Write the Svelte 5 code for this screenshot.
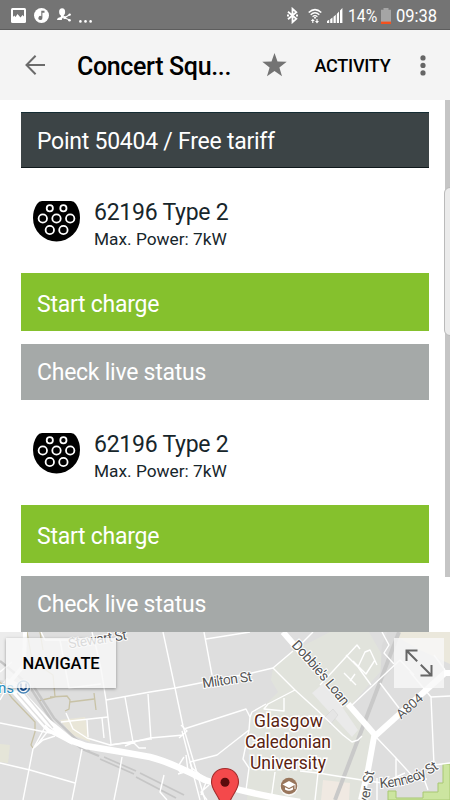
<script>
  const title = 'Concert Squ...';

  const point = {
    name: 'Point 50404 / Free tariff',
    connectors: [
      { id: 1, name: '62196 Type 2', power: 'Max. Power: 7kW' },
      { id: 2, name: '62196 Type 2', power: 'Max. Power: 7kW' }
    ]
  };

  // pins of the type 2 socket: x, y, radius
  const pins = [
    [16.8, 7.3, 3.1],
    [30.4, 7.3, 3.1],
    [9.8, 17.5, 4.2],
    [23.5, 17.5, 4.2],
    [37.2, 17.5, 4.2],
    [16.8, 29, 4.2],
    [30.4, 29, 4.2]
  ];

  const streets = [
    'M41 632L45 640L101 640',
    'M60 640L69 688L101 684',
    'M92 632L97 651L101 669L106 700L111 744',
    'M106 700L150 692L175 688L205 682L252 673L273 668L293 651',
    'M125 697L133 742M133 742L150 738L184 735',
    'M148 694L151 740',
    'M163 632L175 688L183 726L205 800',
    'M182 731L200 800M179 738L187 731L181 725',
    'M184 729L246 709L250 717L249 730L217 755L190 762',
    'M204 632L212 675M206 639L250 632',
    'M61 722L108 717M66 713L73 729L87 738L110 745L150 739',
    'M102 718L104 738M87 720L88 737',
    'M0 723L35 730L60 735',
    'M0 763L30 770L75 783',
    'M45 727L38 740L33 749L23 800M48 731L36 746M55 736L43 740L34 748',
    'M82 749L75 785L72 800M122 757L119 775L114 800',
    'M110 745L133 742L139 748L146 748M125 746L137 741',
    'M0 672L12 662M0 690L10 680L22 686M0 700L8 686',
    'M273 668L295 690L317 710L343 735L352 742L358 740L362 736',
    'M295 690L268 704L264 709L284 711L284 698',
    'M250 717L252 712L266 704M249 730L243 759L249 768L246 790',
    'M184 757L177 768L181 773M186 755L188 771L178 774',
    'M190 762L192 768L207 780L201 795M209 785L201 792L207 800',
    'M164 775L160 792L167 800',
    'M352 705L400 660L414 675M410 672L431 697L434 765',
    'M320 685L334 670L345 658L357 645L360 649',
    'M346 655L358 667L371 685M358 667L365 652L370 650L377 665M353 661L366 674L375 660',
    'M344 673L356 685M350 681L355 674',
    'M380 683L399 708',
    'M382 632L389 645L384 653L394 664',
    'M431 697L450 696M434 655L445 670',
    'M376 737L396 758L416 780L427 779M396 758L396 778L415 776',
    'M300 771L318 773L368 781L383 783L405 773',
    'M318 773L315 800M275 772L271 800M377 778L377 800',
    'M424 779L428 790M434 765L450 763',
    'M300 645L313 632'
  ];
</script>

<div class="screen">
  <header class="status">
    <div class="notifications">
      <svg width="15" height="15" viewBox="0 0 15 15">
        <rect width="15" height="15" rx="1.5" fill="#fff" />
        <path d="M2 2H13V8.5L11.5 7L9.5 9.5L6.5 6L4.5 9L3.2 7.5L2 9Z" fill="#747474" />
      </svg>
      <svg width="15" height="15" viewBox="0 0 15 15">
        <circle cx="7.5" cy="7.5" r="7.5" fill="#fff" />
        <path d="M7.3 2.7H10.5V4.8H8.4V9.8A2 2 0 1 1 7.3 8.2Z" fill="#747474" />
      </svg>
      <svg class="person" width="14" height="14" viewBox="0 0 14 14">
        <ellipse cx="5.1" cy="4" rx="3" ry="3.7" fill="#fff" />
        <path d="M0 12Q0 9.7 3.8 9L4 6.5H6.5L7 8.7L4.8 11L5 12Z" fill="#fff" />
        <path d="M13 6.5L7.5 9.7L13 12.2" fill="none" stroke="#fff" stroke-width="1.1" />
        <circle cx="12.7" cy="6.6" r="1.2" fill="#fff" />
        <circle cx="7.6" cy="9.6" r="1.5" fill="#fff" />
        <circle cx="12.5" cy="12.2" r="1.3" fill="#fff" />
      </svg>
      <svg class="dots" width="13" height="3" viewBox="0 0 13 3" fill="#fff">
        <circle cx="1.4" cy="1.4" r="1.3" />
        <circle cx="6.5" cy="1.4" r="1.3" />
        <circle cx="11.6" cy="1.4" r="1.3" />
      </svg>
    </div>
    <div class="system">
      <svg width="11" height="17" viewBox="0 0 11 17" fill="none" stroke="#fff" stroke-width="1.8">
        <path d="M1 4.8L9.3 11.8L5.5 15.2V1.8L9.3 5.2L1 12.2" />
        <path d="M0 8.5H2M9 8.5H11" />
      </svg>
      <svg class="wifi" width="14" height="16" viewBox="0 0 14 16" fill="none" stroke="#fff">
        <path d="M.7 4.5Q7 -1.2 13.3 4.5" stroke-width="1.5" />
        <path d="M2.7 6.7Q7 2.9 11.3 6.7" stroke-width="1.4" />
        <path d="M4.6 8.7Q7 6.6 9.4 8.7" stroke-width="1.3" />
        <circle cx="7" cy="9.7" r="1" fill="#fff" stroke="none" />
        <path d="M4.8 15V12M9 11V14" stroke-width="1.1" />
        <path d="M2.8 13L4.8 10.7L6.8 13ZM7 13L9 15.4L11 13Z" fill="#fff" stroke="none" />
      </svg>
      <svg class="signal" width="16" height="15" viewBox="0 0 16 15" fill="#fff">
        <path d="M0 13L2.2 11.8V15H0ZM3.2 11.2L5.5 9.5V15H3.2ZM6.5 8.8L8.8 6.8V15H6.5ZM9.8 6L12 3.5V15H9.8ZM13 2.5L15.4 0V15H13Z" />
      </svg>
      <span class="percent">14%</span>
      <svg class="battery" width="10" height="16" viewBox="0 0 10 16">
        <path d="M2.5 0H7.5V1.7H10V16H0V1.7H2.5Z" fill="#a5a5a5" />
        <rect y="13.6" width="10" height="2.4" fill="#f4511e" />
      </svg>
      <span class="clock">09:38</span>
    </div>
  </header>

  <nav class="toolbar">
    <svg class="back" width="21" height="20" viewBox="0 0 21 20" fill="none" stroke="#6b6b6b" stroke-width="2">
      <path d="M20 10H2M10.6 .8L1.5 10L10.6 19.2" />
    </svg>
    <h1>{title}</h1>
    <svg class="star" width="25" height="24" viewBox="0 0 25 24">
      <path d="M12.5 0L15.5 8.6L24.7 8.8L17.4 14.4L20 23.3L12.5 18.1L5 23.3L7.6 14.4L.3 8.8L9.5 8.6Z" fill="#737373" />
    </svg>
    <button class="activity">ACTIVITY</button>
    <svg class="more" width="6" height="21" viewBox="0 0 6 21" fill="#666">
      <circle cx="3" cy="2.9" r="2.6" />
      <circle cx="3" cy="10.4" r="2.6" />
      <circle cx="3" cy="17.9" r="2.6" />
    </svg>
  </nav>

  <main>
    <h2 class="bar">{point.name}</h2>
    {#each point.connectors as connector (connector.id)}
      <section>
        <div class="connector">
          <svg width="47" height="41" viewBox="0 0 47 41">
            <path d="M9 0H38Q41 0 43 3Q47 9 47 17A23.5 23.5 0 0 1 0 17Q0 9 4 3Q6 0 9 0Z" fill="#000" />
            {#each pins as [cx, cy, r]}
              <circle {cx} {cy} {r} fill="none" stroke="#fff" stroke-width="1.8" />
            {/each}
          </svg>
          <div>
            <p class="name">{connector.name}</p>
            <p class="power">{connector.power}</p>
          </div>
        </div>
        <button class="bar start">Start charge</button>
        <button class="bar check">Check live status</button>
      </section>
    {/each}
    <div class="scrollbar"></div>
    <div class="edge-handle"></div>
  </main>

  <div class="map">
    <svg class="tiles" width="450" height="168" viewBox="0 632 450 168">
      <rect y="632" width="450" height="168" fill="#dedede" />
      <!-- blocks and campus -->
      <path d="M0 632H27L24 665L10 682L0 680Z" fill="#ececec" />
      <path d="M273 668L293 651L330 632H369L387 664L352 704L374 735L362 800H247L250 717L264 706L278 692L271 680Z" fill="#e1e3dc" />
      <path d="M380 683L400 660L396 640L398 632H387L382 645Z" fill="#dadada" />
      <path d="M312 693L325 682L358 730L352 737Z" fill="#eaeaea" />
      <path d="M325 717L333 709L338 715L330 725Z" fill="#e5e5e5" stroke="#d5d5d5" stroke-width=".6" />
      <path d="M60 720L85 717L90 742L72 735Z" fill="#e9e6d8" />
      <path d="M0 744L10 745L8 763L0 762Z" fill="#e5e5d8" />
      <path d="M398 632H450V664L420 650L399 638Z" fill="#ebe8dc" />
      <path d="M323 780L350 783L349 800H321Z" fill="#f0e9e2" />
      <path d="M388 791H396V798H423V792H438V783H443V764H450V800H388Z" fill="#cce5a0" stroke="#a8c873" stroke-width="1" />

      <!-- paths and boundaries -->
      <g fill="none" stroke="#c8c2a6" stroke-width="1.3">
        <path d="M27 632L32 660L53 675L55 697L38 701M40 632L43 650M50 697L67 696L70 700L69 709L65 711M70 702L94 699M94 693L96 710" />
        <path d="M0 682L12 698L35 722L35 732L31 745L33 748" />
      </g>

      <!-- railways -->
      <path d="M399 632L335 800" fill="none" stroke="#c9c9c9" stroke-width="4" />
      <g fill="none" stroke="#c6c6c6" stroke-width="2.4">
        <path d="M0 661L28 684L57 729L82 749L99 756M34 687L54 718L76 739L90 750" />
        <path d="M100 759L134 774M104 757L136 771M136 777L176 798M140 773L184 795" stroke-width="1.7" />
      </g>

      <!-- streets -->
      <g fill="none" stroke="#fff" stroke-width="1.4" stroke-linejoin="round">
        {#each streets as d}
          <path {d} />
        {/each}
      </g>
      <g fill="none" stroke="#fff" stroke-linejoin="round">
        <path d="M5 680L17 689L48 722L70 740L86 746L122 752L150 757Q170 762 205 780Q240 792 300 802" stroke-width="6.5" />
        <path d="M25 632L24 665L10 682M12 690L48 730L73 743" stroke-width="4" />
        <path d="M20 688L53 728M17 693L45 725" stroke="#e0e0e0" stroke-width="1.2" />
        <path d="M283 632L310 663M348 704L375 735" stroke-width="6" />
        <path d="M450 673H445L374 737L368 770L361 800" stroke-width="6" />
      </g>

      <g class="road">
        <text x="69" y="648.5" textLength="59" transform="rotate(-9 69 648.5)">Stewart St</text>
        <text x="203" y="688" textLength="50" transform="rotate(-8 203 688)">Milton St</text>
        <path id="dobbies" d="M291 646Q315 671 345 709" fill="none" />
        <text><textPath href="#dobbies" textLength="80">Dobbie's Loan</textPath></text>
        <text class="short" x="401" y="719.5" transform="rotate(-41 401 719.5)">A804</text>
        <path id="kennedy" d="M380 788Q416 786 441 767" fill="none" />
        <text><textPath href="#kennedy" textLength="63">Kennedy St</textPath></text>
        <text x="368" y="805" textLength="34" transform="rotate(-79 368 805)">ver St</text>
      </g>

      <g class="place">
        <text x="254" y="727" textLength="69">Glasgow</text>
        <text x="245" y="747.5" textLength="86">Caledonian</text>
        <text x="250" y="768.5" textLength="76">University</text>
      </g>
      <circle cx="289" cy="787" r="9" fill="#f8f8f6" />
      <circle cx="289" cy="786" r="8.3" fill="#99765c" />
      <path d="M282.5 784.5L289 781L295.5 784.5L289 788Z" fill="#fff" />
      <path d="M285 787.3V789.5Q289 792 293 789.5V787.3L289 789.3Z" fill="#fff" />
      <path d="M295 784.5V789" stroke="#fff" stroke-width=".9" />

      <text class="station" x="-2" y="693">ns</text>
      <circle cx="23.5" cy="687" r="7.5" fill="#fff" />
      <circle cx="23.5" cy="687" r="6" fill="#fff" stroke="#4a86b8" stroke-width="1.6" />
      <path d="M20.9 683.5V687.3A2.6 2.6 0 0 0 26.1 687.3V683.5" fill="none" stroke="#1c57a0" stroke-width="2" />

      <path d="M225 768.5C217 768.5 211.5 774.5 211.5 782C211.5 790 218 794 222 806H228C232 794 238.5 790 238.5 782C238.5 774.5 233 768.5 225 768.5Z" fill="#f4494b" stroke="#a32d2d" stroke-width="1.1" />
      <circle cx="225" cy="782.3" r="4.5" fill="#5b0c0c" />
    </svg>
    <button class="navigate">NAVIGATE</button>
    <button class="expand" aria-label="Expand map">
      <svg width="28" height="28" viewBox="0 0 28 28" fill="none" stroke="#666" stroke-width="2">
        <path d="M1.5 12V1.5H12.5M1.5 1.5L12.2 12.2" />
        <path d="M26.5 16V26.5H15.5M26.5 26.5L15.8 15.8" />
      </svg>
    </button>
  </div>
</div>

<style>
  :global(body) {
    margin: 0;
    background: #fff;
  }

  .screen {
    width: 450px;
    height: 800px;
    display: flex;
    flex-direction: column;
    overflow: hidden;
    font-family: Roboto, sans-serif;
    color: #17262b;
  }

  h1,
  h2,
  p {
    margin: 0;
    font-weight: 400;
  }

  button {
    border: 0;
    padding: 0;
    font-family: inherit;
    background: none;
  }

  svg {
    display: block;
    flex: none;
  }

  .status {
    box-sizing: border-box;
    height: 30px;
    flex: none;
    display: flex;
    justify-content: space-between;
    padding: 0 13px 0 11px;
    background: #747474;
    border-bottom: 1px solid #5d5d5d;
    color: #fff;
  }

  .notifications,
  .system {
    display: flex;
    align-items: center;
  }

  .notifications {
    gap: 8px;
    padding-top: 2px;
  }

  .person {
    margin-bottom: 1px;
  }

  .dots {
    margin-top: 12px;
  }

  .system {
    padding-top: 2px;
    font-size: 19px;
    line-height: 28px;
  }

  .wifi {
    margin-left: 10px;
  }

  .signal {
    margin-left: 5px;
  }

  .percent {
    width: 29px;
    margin-left: 5px;
    white-space: nowrap;
    transform: scaleX(0.83);
    transform-origin: left;
  }

  .battery {
    margin-left: 4px;
  }

  .clock {
    width: 41px;
    margin-left: 5px;
    transform: scaleX(0.87);
    transform-origin: left;
  }

  .toolbar {
    box-sizing: border-box;
    height: 70px;
    flex: none;
    display: flex;
    align-items: center;
    padding-left: 25px;
    background: #f4f4f4;
    color: #000;
  }

  .back {
    margin-top: -1px;
  }

  h1 {
    width: 156px;
    margin-left: 31px;
    padding-top: 3px;
    font-size: 25px;
    font-weight: 500;
    line-height: 30px;
    letter-spacing: -0.35px;
    white-space: nowrap;
  }

  .star {
    margin-left: 29px;
    margin-top: -1px;
  }

  .activity {
    width: 77px;
    margin-left: 27px;
    font-size: 18px;
    font-weight: 500;
    letter-spacing: -0.25px;
    color: #000;
    white-space: nowrap;
  }

  .more {
    margin-left: 29px;
  }

  main {
    position: relative;
    box-sizing: border-box;
    height: 532px;
    flex: none;
    padding: 12px 21px 0;
    overflow: hidden;
    background: #fff;
  }

  .bar {
    box-sizing: border-box;
    display: flex;
    align-items: center;
    width: 408px;
    height: 56px;
    padding: 3px 16px 0;
    font-size: 23px;
    line-height: 28px;
    letter-spacing: -0.25px;
    color: #fff;
    background: #3c4446;
  }

  h2.bar {
    border-top: 1px solid #152d34;
    border-bottom: 1px solid #10191c;
  }

  .start {
    height: 58px;
    padding-top: 5px;
    background: #85c12d;
  }

  .check {
    height: 56.5px;
    margin-top: 12.5px;
    background: #a5a9a8;
  }

  .connector {
    box-sizing: border-box;
    height: 105px;
    display: flex;
    gap: 14px;
    padding: 33px 0 0 12px;
  }

  .name {
    margin-top: -2px;
    font-size: 23px;
    line-height: 28px;
    letter-spacing: -0.25px;
  }

  .power {
    font-size: 17.3px;
    line-height: 24px;
  }

  .scrollbar {
    position: absolute;
    top: 0;
    right: 0;
    width: 5px;
    height: 477px;
    background: #c5c5c5;
  }

  .edge-handle {
    position: absolute;
    top: 87px;
    right: -6px;
    box-sizing: border-box;
    width: 12px;
    height: 149px;
    border: 1px solid #bababa;
    border-radius: 6px;
    background: #ebebeb;
  }

  .map {
    position: relative;
    height: 168px;
    flex: none;
  }

  .road text {
    font-size: 14px;
    fill: #555;
    stroke: #fff;
    stroke-width: 2px;
    paint-order: stroke;
  }

  .road .short {
    font-size: 13px;
    stroke-width: 1.2px;
  }

  .place text {
    font-size: 17.5px;
    fill: #5a2412;
    stroke: #fff;
    stroke-width: 3px;
    paint-order: stroke;
  }

  .station {
    font-size: 15px;
    fill: #2990c5;
    stroke: #fff;
    stroke-width: 2px;
    paint-order: stroke;
  }

  .navigate,
  .expand {
    position: absolute;
    top: 6px;
    height: 50px;
    background: rgba(248, 248, 248, 0.82);
  }

  .navigate {
    left: 6px;
    width: 110px;
    font-size: 16.5px;
    font-weight: 500;
    letter-spacing: -0.1px;
    color: #000;
    box-shadow: 0 1px 3px rgba(0, 0, 0, 0.35);
  }

  .expand {
    left: 394px;
    width: 50px;
    display: flex;
    align-items: center;
    justify-content: center;
  }
</style>
